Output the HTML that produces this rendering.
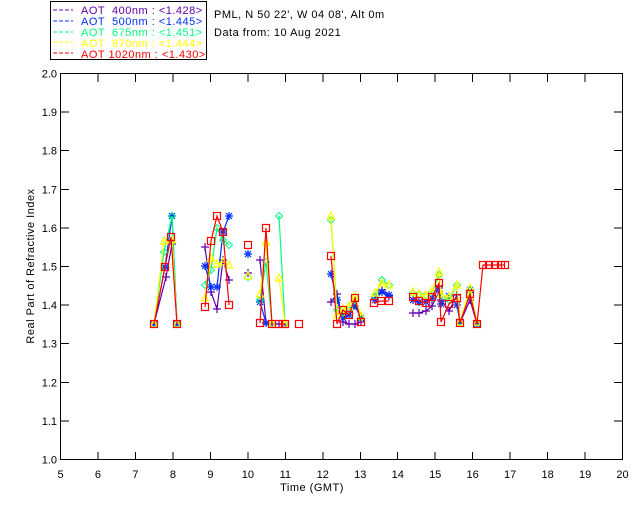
<!DOCTYPE html>
<html><head><meta charset="utf-8"><style>
body{margin:0;background:#fff;width:640px;height:512px;overflow:hidden}
svg{display:block}
text{font-family:"Liberation Sans",sans-serif;font-size:11px;letter-spacing:0.5px}
</style></head><body>
<svg id="s" width="640" height="512" xmlns="http://www.w3.org/2000/svg" shape-rendering="crispEdges">
<rect x="50.5" y="1.5" width="156" height="58" fill="#fff" stroke="#000"/>
<g>
<line x1="53" y1="10" x2="73" y2="10" stroke="#6000b0" stroke-dasharray="4,2"/><text x="81" y="14" fill="#6000b0" xml:space="preserve">AOT  400nm : &lt;1.428&gt;</text>
<line x1="53" y1="21" x2="73" y2="21" stroke="#0030ff" stroke-dasharray="4,2"/><text x="81" y="25" fill="#0030ff" xml:space="preserve">AOT  500nm : &lt;1.445&gt;</text>
<line x1="53" y1="32" x2="73" y2="32" stroke="#00ff80" stroke-dasharray="4,2"/><text x="81" y="36" fill="#00ff80" xml:space="preserve">AOT  675nm : &lt;1.451&gt;</text>
<line x1="53" y1="42" x2="73" y2="42" stroke="#ffff00" stroke-dasharray="4,2"/><text x="81" y="47" fill="#ffff00" xml:space="preserve">AOT  870nm : &lt;1.444&gt;</text>
<line x1="53" y1="53" x2="73" y2="53" stroke="#ff0000" stroke-dasharray="4,2"/><text x="81" y="58" fill="#ff0000" xml:space="preserve">AOT 1020nm : &lt;1.430&gt;</text>
</g>
<text x="214" y="18">PML, N 50 22', W 04 08', Alt 0m</text>
<text x="214" y="36">Data from: 10 Aug 2021</text>
<rect x="60.5" y="73.5" width="562" height="386" fill="none" stroke="#000"/>
<g id="ax"></g>
<text x="312" y="491" text-anchor="middle">Time (GMT)</text>
<text transform="translate(34,266) rotate(-90)" text-anchor="middle">Real Part of Refractive Index</text>
<g id="d" shape-rendering="auto"></g>
</svg>
<script>
var ax=document.getElementById('ax'),d=document.getElementById('d'),h='';
for(var i=0;i<=15;i++){var x=60.5+i*37.47;h+='<line x1="'+x+'" y1="460" x2="'+x+'" y2="452" stroke="#000"/><line x1="'+x+'" y1="74" x2="'+x+'" y2="82" stroke="#000"/><text x="'+x+'" y="478" text-anchor="middle" style="letter-spacing:0">'+(5+i)+'</text>';}
for(var j=0;j<=10;j++){var y=459.5-j*38.6;h+='<line x1="61" y1="'+y+'" x2="69" y2="'+y+'" stroke="#000"/><line x1="622" y1="'+y+'" x2="614" y2="'+y+'" stroke="#000"/><text x="57" y="'+(y+4)+'" text-anchor="end" style="letter-spacing:0">'+(1+j/10).toFixed(1)+'</text>';}
ax.innerHTML=h;
var S={
v:{c:'#6000b0',m:'+',p:[[[154,324],[166,277],[172,244],[177,324]],[[205,247],[211,292],[217,309],[223,260],[229,280]],[[248,273]],[[260,260],[266,323],[272,324],[279,324],[285,324]],[[331,302],[337,294],[343,322],[349,324],[355,324],[361,322]],[[375,298],[382,290],[389,296]],[[413,313],[419,313],[426,311],[432,306],[439,292],[441,300],[449,311],[457,295],[460,323],[470,300],[477,324]]]},
b:{c:'#0030ff',m:'*',p:[[[154,324],[165,267],[172,216],[177,324]],[[205,266],[211,287],[217,287],[223,232],[229,216]],[[248,254]],[[260,302],[266,323]],[[331,274],[337,300],[343,318],[349,315],[355,306],[361,318]],[[375,300],[382,292],[389,295]],[[413,300],[419,302],[426,302],[432,298],[439,288],[441,304],[449,296],[457,305],[460,322],[470,290],[477,324]]]},
g:{c:'#00ff80',m:'d',p:[[[154,324],[164,252],[172,216],[177,324]],[[205,285],[211,270],[217,228],[223,240],[229,245]],[[248,277]],[[260,300],[266,262],[272,324]],[[279,216],[285,324]],[[331,220],[337,310],[343,313],[349,310],[355,300],[361,318]],[[375,296],[382,280],[389,285]],[[413,293],[419,294],[426,295],[432,292],[439,275],[441,296],[449,300],[457,285],[460,323],[470,290],[477,324]]]},
y:{c:'#ffff00',m:'t',p:[[[154,324],[164,241],[172,240],[177,324]],[[205,298],[211,258],[217,264],[223,262],[229,265]],[[248,276]],[[260,294],[266,242],[272,324]],[[279,278],[285,324]],[[331,216],[337,315],[343,309],[349,306],[355,296],[361,316]],[[375,293],[382,283],[389,285]],[[413,292],[419,294],[426,295],[432,291],[439,272],[441,294],[449,297],[457,285],[460,322],[470,288],[477,322]]]},
r:{c:'#ff0000',m:'s',p:[[[154,324],[165,267],[171,237],[177,324]],[[205,307],[211,241],[217,216],[223,232],[229,305]],[[248,245]],[[260,323],[266,228],[272,324]],[[279,324],[285,324]],[[299,324]],[[331,256],[337,324],[343,310],[349,315],[355,298],[361,322]],[[374,303],[381,301],[389,301]],[[413,297],[419,301],[426,303],[432,297],[439,283],[441,322],[449,304],[457,298],[460,323],[470,294],[477,324],[483,265],[489,265],[495,265],[501,265],[505,265]]]}
};
var o='';
['v','b','g','y','r'].forEach(function(k){var s=S[k];s.p.forEach(function(seg){
if(seg.length>1)o+='<polyline points="'+seg.join(' ')+'" fill="none" stroke="'+s.c+'" stroke-width="1.2"/>';
seg.forEach(function(q){var x=q[0],y=q[1],c=s.c;
if(s.m=='+')o+='<path d="M'+(x-4)+' '+y+'h8M'+x+' '+(y-4)+'v8" stroke="'+c+'" stroke-width="1.2"/>';
else if(s.m=='*')o+='<path d="M'+(x-4)+' '+y+'h8M'+x+' '+(y-4)+'v8M'+(x-3)+' '+(y-3)+'l6 6M'+(x+3)+' '+(y-3)+'l-6 6" stroke="'+c+'" stroke-width="1.2"/>';
else if(s.m=='d')o+='<path d="M'+x+' '+(y-3.5)+'l3.5 3.5l-3.5 3.5l-3.5 -3.5z" fill="none" stroke="'+c+'"/>';
else if(s.m=='t')o+='<path d="M'+x+' '+(y-4)+'l3.5 7h-7z" fill="none" stroke="'+c+'" stroke-width="1.2"/>';
else o+='<rect x="'+(x-3.5)+'" y="'+(y-3.5)+'" width="7" height="7" fill="none" stroke="'+c+'" stroke-width="1.2"/>';
});});});
d.innerHTML=o;
</script>
</body></html>
